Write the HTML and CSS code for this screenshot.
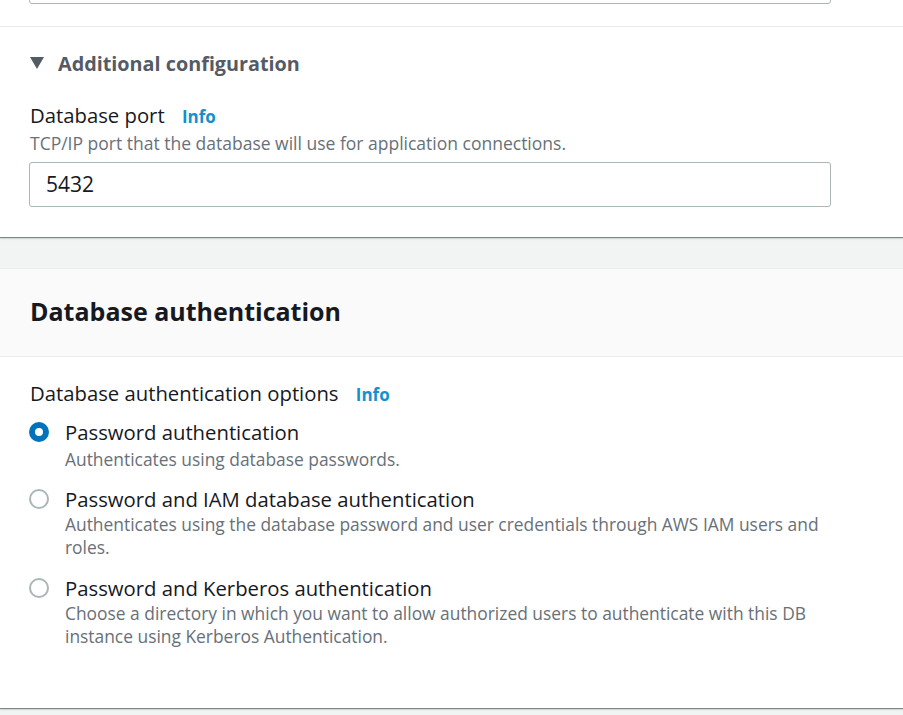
FILE: index.html
```html
<!DOCTYPE html>
<html lang="en">
<head>
<meta charset="utf-8">
<title>Database authentication</title>
<link rel="stylesheet" href="styles.css">
</head>
<body>
<section class="container first">
  <div class="prev-input"></div>
  <div class="divider"></div>
  <div class="expander">
    <svg class="caret" width="14" height="12" viewBox="0 0 14 12"><path d="M0 0 H14 L7 12 Z" fill="#545b64"/></svg>
    <span>Additional configuration</span>
  </div>
  <div class="field">
    <div class="label">Database port <a class="info">Info</a></div>
    <div class="desc">TCP/IP port that the database will use for application connections.</div>
    <div class="input">5432</div>
  </div>
</section>

<section class="container second">
  <header class="cheader">
    <h2>Database authentication</h2>
  </header>
  <div class="cbody">
    <div class="label">Database authentication options <a class="info">Info</a></div>
    <div class="radios">
      <div class="option first-opt">
        <span class="radio checked"></span>
        <div class="otext">
          <div class="olabel">Password authentication</div>
          <div class="odesc">Authenticates using database passwords.</div>
        </div>
      </div>
      <div class="option">
        <span class="radio"></span>
        <div class="otext">
          <div class="olabel">Password and IAM database authentication</div>
          <div class="odesc">Authenticates using the database password and user credentials through AWS IAM users and roles.</div>
        </div>
      </div>
      <div class="option">
        <span class="radio"></span>
        <div class="otext">
          <div class="olabel">Password and Kerberos authentication</div>
          <div class="odesc">Choose a directory in which you want to allow authorized users to authenticate with this DB instance using Kerberos Authentication.</div>
        </div>
      </div>
    </div>
  </div>
</section>
</body>
</html>
```
FILE: styles.css
```css
* { box-sizing: border-box; }
html, body {
  margin: 0;
  padding: 0;
  background: #f2f3f3;
  font-family: "Open Sans", "Noto Sans", sans-serif;
  color: #16191f;
}
body { overflow: hidden; height: 715px; }

.container {
  background: #fff;
  box-shadow: 0 1px 1px 0 rgba(0, 28, 36, 0.45), 0 2px 2px 0 rgba(0, 28, 36, 0.08);
}
.container.first {
  padding: 0 72px 30px 29px;
}
.prev-input {
  margin-top: -40px;
  height: 44px;
  width: 802px;
  border: 1px solid #aab7b8;
  border-radius: 3px;
}
.divider {
  height: 1px;
  background: #eaeded;
  margin: 22px -72px 0 -29px;
}
.expander {
  margin-top: 22px;
  display: flex;
  align-items: center;
  height: 28px;
  color: #545b64;
  font-weight: 700;
  font-size: 19.8px;
  padding-left: 1px;
}
.caret { margin-right: 14px; }
.field { margin-top: 23px; padding-left: 1px; }
.label {
  font-size: 20.3px;
  line-height: 30px;
  color: #16191f;
}
.info {
  color: #1590cf;
  font-weight: 700;
  font-size: 17px;
  margin-left: 12px;
}
.desc {
  font-size: 17.5px;
  line-height: 22px;
  color: #687078;
}
.input {
  margin: 8px 0 0 -1px;
  width: 802px;
  height: 45px;
  border: 1px solid #aab7b8;
  border-radius: 3px;
  padding: 0 16px;
  font-size: 21px;
  line-height: 43px;
  color: #16191f;
}

.container.second {
  margin-top: 31px;
  border-top: 1px solid #eaeded;
  padding-bottom: 60px;
}
.cheader {
  background: #fafafa;
  border-bottom: 1px solid #eaeded;
  padding: 25px 30px 28px;
}
.cheader h2 {
  margin: 0;
  font-size: 25px;
  line-height: 34px;
  font-weight: 700;
  color: #16191f;
}
.cbody { padding: 21px 30px 0; }
.radios {
  margin-top: 8px;
  display: flex;
  flex-direction: column;
  gap: 15px;
}
.option {
  display: flex;
  align-items: flex-start;
}
.first-opt { margin-bottom: -1px; }
.first-opt .odesc { margin-top: 2px; }
.radio {
  flex: none;
  width: 20px;
  height: 20px;
  margin: 4px 16px 0 -1px;
  border-radius: 50%;
  border: 2px solid #aab7b8;
  background: #fff;
}
.radio.checked {
  border: 6px solid #0073bb;
}
.olabel {
  font-size: 20.3px;
  line-height: 28px;
}
.odesc {
  font-size: 17.4px;
  line-height: 23px;
  color: #687078;
  max-width: 770px;
}
```
